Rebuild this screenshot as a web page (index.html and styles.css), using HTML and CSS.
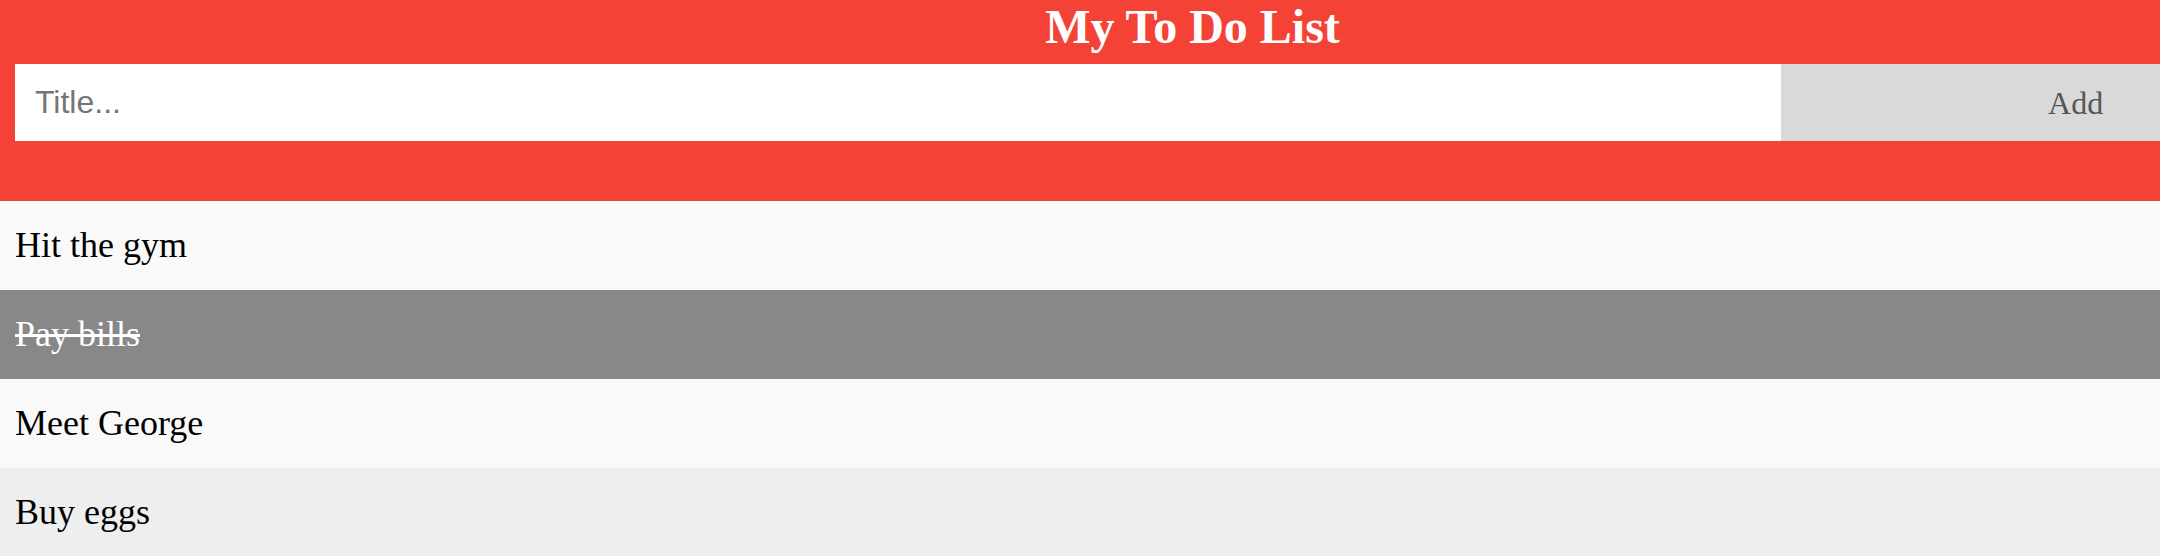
FILE: index.html
```html
<!DOCTYPE html>
<html>
<head>
<meta charset="utf-8">
<title>My To Do List</title>
<link rel="stylesheet" href="styles.css">
</head>
<body>
<div class="header">
  <div class="header-inner">
    <h2 class="title">My To Do List</h2>
    <div class="add-row">
      <input class="title-input" type="text" placeholder="Title...">
      <span class="add-btn">Add</span>
    </div>
  </div>
</div>
<ul class="todo-list">
  <li class="item">Hit the gym</li>
  <li class="item checked">Pay bills</li>
  <li class="item">Meet George</li>
  <li class="item">Buy eggs</li>
</ul>
</body>
</html>
```
FILE: styles.css
```css
html, body {
  margin: 0;
  padding: 0;
  background: #ffffff;
  font-family: "Liberation Serif", "Times New Roman", serif;
}

.header {
  background: #f44336;
  height: 201px;
  overflow: hidden;
  box-sizing: border-box;
}

.header-inner {
  width: 2355px;
  margin-left: 15px;
}

.title {
  margin: 0;
  text-align: center;
  color: #ffffff;
  font-size: 48px;
  font-weight: bold;
  font-family: "Liberation Serif", "Times New Roman", serif;
  line-height: 53px;
}

.add-row {
  display: flex;
  margin-top: 11px;
  height: 77px;
}

.title-input {
  width: 75%;
  height: 77px;
  box-sizing: border-box;
  border: none;
  margin: 0;
  padding: 0 20px;
  font-family: "Liberation Sans", Arial, sans-serif;
  font-size: 32px;
  color: #000;
  background: #ffffff;
  outline: none;
}

.title-input::placeholder {
  color: #757575;
}

.add-btn {
  width: 25%;
  height: 77px;
  background: #d9d9d9;
  color: #555555;
  font-family: "Liberation Serif", "Times New Roman", serif;
  font-size: 32px;
  display: flex;
  align-items: center;
  justify-content: center;
  padding-top: 2px;
  box-sizing: border-box;
}

.todo-list {
  list-style: none;
  margin: 0;
  padding: 0;
}

.item {
  height: 89px;
  box-sizing: border-box;
  padding: 24px 15px;
  font-size: 36px;
  line-height: 41px;
  background: #eeeeee;
  color: #000000;
}

.item:nth-child(odd) {
  background: #f9f9f9;
}

.item.checked {
  background: #888888;
  color: #ffffff;
  text-decoration: line-through;
}
```
